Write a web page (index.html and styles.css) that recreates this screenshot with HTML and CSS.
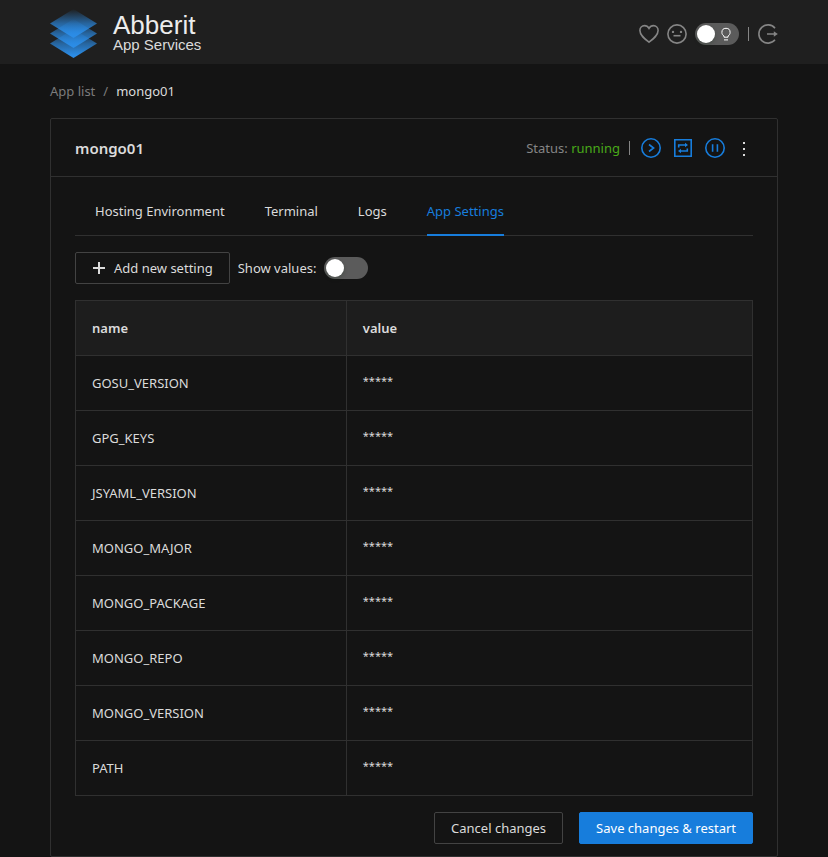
FILE: index.html
```html
<!DOCTYPE html>
<html lang="en">
<head>
<meta charset="utf-8">
<meta name="viewport" content="width=device-width, initial-scale=1">
<title>mongo01 - Abberit App Services</title>
<link rel="stylesheet" href="styles.css">
</head>
<body>
<header class="topbar">
  <a class="brand" href="#">
    <svg class="logo" viewBox="0 0 48 50" aria-hidden="true">
      <defs>
        <linearGradient id="layer" x1="0" y1="0" x2="0" y2="1">
          <stop offset="0" stop-color="#2b8ce6" stop-opacity="0"/>
          <stop offset="0.5" stop-color="#2b8ce6" stop-opacity="0.64"/>
          <stop offset="0.9" stop-color="#2b8ce6"/>
        </linearGradient>
      </defs>
      <path fill="url(#layer)" d="M23.500 20 47 34.500 23.500 49 0 34.500z"/>
      <path fill="url(#layer)" d="M23.500 10 47 24.500 23.500 39 0 24.500z"/>
      <path fill="url(#layer)" d="M23.500 0 47 14.500 23.500 29 0 14.500z"/>
    </svg>
    <span class="brand-text"><span class="brand-name">Abberit</span><span class="brand-sub">App Services</span></span>
  </a>
  <nav class="tools" aria-label="Account">
    <button class="icon-button" type="button" aria-label="Favourites"><svg viewBox="0 0 20 20"><path d="M10 18.200C5.500 14.800.9 11.300.9 6.500c0-2.900 2.100-4.900 4.600-4.900 1.900 0 3.500 1 4.500 2.700 1-1.700 2.600-2.700 4.500-2.700 2.500 0 4.600 2 4.600 4.900 0 4.800-4.600 8.300-9.100 11.700z"/></svg></button>
    <button class="icon-button" type="button" aria-label="Feedback"><svg viewBox="0 0 20 20"><circle cx="10" cy="10" r="9.100"/><path d="M6.500 11.700h7"/><g class="solid"><circle cx="6" cy="7.900" r="1.200"/><circle cx="14" cy="7.900" r="1.200"/></g></svg></button>
    <label class="theme"><input class="switch" type="checkbox" role="switch" aria-label="Light theme"><svg class="bulb" viewBox="0 0 14 14" aria-hidden="true"><path d="M5 10.200V9C3.700 8.300 2.900 7 2.900 5.400a4.100 4.100 0 0 1 8.200 0C11.100 7 10.300 8.300 9 9v1.200zM5 12.900h4"/></svg></label>
    <span class="bar"></span>
    <button class="icon-button" type="button" aria-label="Log out"><svg viewBox="0 0 20 20"><path d="M17 4.200a9.100 9.100 0 1 0 0 11.600M9 10h8"/><path class="solid" d="M15.800 7.300 19.800 10l-4 2.700z"/></svg></button>
  </nav>
</header>
<main class="page">
  <nav class="crumbs" aria-label="Breadcrumb"><a href="#">App list</a><span>/</span><span class="current">mongo01</span></nav>
  <section class="card">
    <div class="card-head">
      <h1>mongo01</h1>
      <div class="actions">
        <span class="status">Status: <span class="running">running</span></span>
        <span class="bar"></span>
        <button class="icon-button blue" type="button" aria-label="Start"><svg viewBox="0 0 20 20"><circle cx="10" cy="10" r="9.200"/><path d="m8 6.500 4.600 3.500L8 13.500"/></svg></button>
        <button class="icon-button blue" type="button" aria-label="Restart"><svg viewBox="0 0 20 20"><path d="M1.800 1.800h16.400v16.400H1.800zM5.700 9.600V7h7.500M14.300 10.400V13H6.800"/><path class="solid" d="m12 4.800 3 2.200-3 2.200zM8 10.800 5 13l3 2.200z"/></svg></button>
        <button class="icon-button blue" type="button" aria-label="Pause"><svg viewBox="0 0 20 20"><circle cx="10" cy="10" r="9.200"/><path d="M7.600 6.300v7.400M12.400 6.300v7.400"/></svg></button>
        <button class="icon-button more" type="button" aria-label="More"><svg viewBox="0 0 10 20"><path class="solid" d="M4 4h2v2H4zM4 10h2v2H4zM4 16h2v2H4z"/></svg></button>
      </div>
    </div>
    <div class="card-body">
      <nav class="tabs" aria-label="App sections">
        <a href="#">Hosting Environment</a><a href="#">Terminal</a><a href="#">Logs</a><a class="active" href="#" aria-current="page">App Settings</a>
      </nav>
      <div class="toolbar">
        <button class="button add" type="button"><svg viewBox="0 0 14 14" aria-hidden="true"><path d="M7 1v12M1 7h12"/></svg>Add new setting</button>
        <label for="show-values">Show values:</label>
        <input class="switch" id="show-values" type="checkbox" role="switch">
      </div>
      <table class="settings">
        <thead><tr><th scope="col">name</th><th scope="col">value</th></tr></thead>
        <tbody>
          <tr><td>GOSU_VERSION</td><td class="masked">*****</td></tr>
          <tr><td>GPG_KEYS</td><td class="masked">*****</td></tr>
          <tr><td>JSYAML_VERSION</td><td class="masked">*****</td></tr>
          <tr><td>MONGO_MAJOR</td><td class="masked">*****</td></tr>
          <tr><td>MONGO_PACKAGE</td><td class="masked">*****</td></tr>
          <tr><td>MONGO_REPO</td><td class="masked">*****</td></tr>
          <tr><td>MONGO_VERSION</td><td class="masked">*****</td></tr>
          <tr><td>PATH</td><td class="masked">*****</td></tr>
        </tbody>
      </table>
      <div class="footer">
        <button class="button" type="button">Cancel changes</button>
        <button class="button primary" type="button">Save changes &amp; restart</button>
      </div>
    </div>
  </section>
</main>
</body>
</html>
```
FILE: styles.css
```css
* { box-sizing: border-box; }

body {
  margin: 0;
  background: #141414;
  color: #dbdbdb;
  font: 13px/22px "Segoe UI", "Noto Sans", "Open Sans", sans-serif;
}

a { color: inherit; text-decoration: none; }

button { font: inherit; color: inherit; cursor: pointer; }

svg {
  display: block;
  fill: none;
  stroke: currentColor;
}

.solid { fill: currentColor; stroke: none; }

.topbar {
  display: flex;
  align-items: center;
  justify-content: space-between;
  height: 64px;
  padding: 0 50px;
  background: #1f1f1f;
}

.brand {
  display: flex;
  align-items: center;
  gap: 15px;
  padding-top: 4px;
  font-family: Arial, "Liberation Sans", sans-serif;
}

.logo { width: 48px; height: 50px; stroke: none; }

.brand-text { display: flex; flex-direction: column; padding-bottom: 2px; }

.brand-name { font-size: 26px; line-height: 24px; color: #ececec; }

.brand-sub { font-size: 15px; line-height: 16px; }

.tools { display: flex; align-items: center; gap: 8px; padding-top: 4px; color: #858585; }

.icon-button {
  display: block;
  padding: 0;
  border: 0;
  background: none;
}

.icon-button svg { width: 20px; height: 20px; stroke-width: 1.6; }

.blue { color: #177ddc; }

.bar { width: 1px; height: 14px; margin: 0 1px; background: #858585; }

.theme { position: relative; display: block; height: 22px; }

.bulb {
  position: absolute;
  top: 4px;
  right: 6px;
  width: 14px;
  height: 14px;
  color: #fff;
}

.switch {
  display: block;
  appearance: none;
  width: 44px;
  height: 22px;
  margin: 0;
  padding: 2px;
  border-radius: 11px;
  background: #5b5b5b;
  cursor: pointer;
}

.switch::before {
  content: "";
  display: block;
  width: 18px;
  height: 18px;
  border-radius: 50%;
  background: #fff;
  box-shadow: 0 2px 4px rgba(0, 35, 11, 0.2);
}

.switch:checked { background: #177ddc; }

.switch:checked::before { margin-left: auto; }

.page { padding: 0 50px; }

.crumbs {
  display: flex;
  gap: 8px;
  padding: 16px 0;
  color: #7c7c7c;
}

.current { color: #dbdbdb; }

.card { border: 1px solid #303030; border-radius: 2px; }

.card-head {
  display: flex;
  align-items: center;
  justify-content: space-between;
  height: 58px;
  padding: 0 24px;
  border-bottom: 1px solid #303030;
}

h1 { margin: 0; font-size: 15px; font-weight: 600; }

.actions { display: flex; align-items: center; gap: 12px; }

.actions .bar { margin: 0 -1px 0 -3px; }

.status { color: #858585; }

.running { color: #49aa19; }

.more svg { width: 10px; }

.more { margin: 0 4px 0 2px; color: #dbdbdb; }

.card-body { padding: 12px 24px; }

.tabs {
  display: flex;
  gap: 40px;
  height: 47px;
  padding: 0 20px;
  border-bottom: 1px solid #303030;
}

.tabs a { height: 47px; padding-top: 11px; }

.tabs .active { color: #177ddc; border-bottom: 2px solid #177ddc; }

.toolbar {
  display: flex;
  align-items: center;
  gap: 8px;
  padding: 16px 0;
}

.button {
  display: flex;
  align-items: center;
  gap: 8px;
  height: 32px;
  padding: 0 16px;
  border: 1px solid #434343;
  border-radius: 2px;
  background: transparent;
}

.add svg { width: 14px; height: 14px; stroke-width: 2; }

.primary { border-color: #177ddc; background: #177ddc; color: #fff; }

.settings {
  width: 100%;
  border-collapse: collapse;
  table-layout: fixed;
}

.settings th, .settings td {
  height: 55px;
  padding: 0 16px;
  border: 1px solid #303030;
  text-align: left;
}

.settings th { background: #1d1d1d; font-weight: 600; }

.settings th:first-child { width: 40%; }

.settings .masked { padding-bottom: 4px; font-size: 11px; }

.footer {
  display: flex;
  justify-content: flex-end;
  gap: 16px;
  padding-top: 16px;
}
```
